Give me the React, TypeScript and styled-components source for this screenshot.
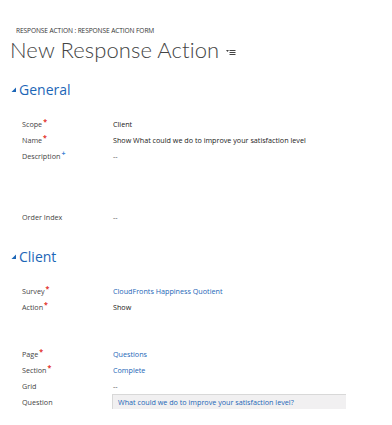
import * as React from "react";
import styled, { createGlobalStyle } from "styled-components";

const GlobalStyle = createGlobalStyle`
  html, body {
    margin: 0;
    padding: 0;
    background: #ffffff;
  }
  body {
    font-family: "Open Sans", "Noto Sans", sans-serif;
    color: #222;
  }
`;

const Page = styled.div`
  width: 392px;
  height: 425px;
  overflow: hidden;
  padding-top: 27px;
  box-sizing: border-box;
`;

const Breadcrumb = styled.div`
  padding-left: 16px;
  font-size: 6.6px;
  line-height: 8px;
  color: #333;
  text-transform: uppercase;
  letter-spacing: -0.1px;
`;

const TitleRow = styled.div`
  display: flex;
  align-items: center;
  gap: 7px;
  padding-left: 10px;
  margin-top: 1px;
  height: 28px;
`;

const Title = styled.h1`
  margin: 0;
  font-family: "Lato", "Open Sans", sans-serif;
  font-size: 22px;
  font-weight: 300;
  color: #444;
  line-height: 28px;
  letter-spacing: 0.1px;
`;

const MenuIcon = () => (
  <svg width="10" height="7" viewBox="0 0 10 7" style={{ marginTop: 4 }}>
    <polygon points="0,1 3,1 1.5,3" fill="#444" />
    <rect x="3.5" y="1" width="6" height="1" fill="#444" />
    <rect x="3.5" y="3" width="6" height="1" fill="#444" />
    <rect x="3.5" y="5" width="6" height="1" fill="#444" />
  </svg>
);

const SectionHeader = styled.div<{ $top: number }>`
  display: flex;
  align-items: center;
  gap: 2px;
  padding-left: 11px;
  margin-top: ${(p) => p.$top}px;
  height: 20px;
  color: #1c66b7;
  font-size: 14px;
`;

const Triangle = () => (
  <svg width="6" height="6" viewBox="0 0 6 6" style={{ marginTop: 2 }}>
    <polygon points="5,0.5 5,5 0.5,5" fill="#1c66b7" />
  </svg>
);

const Form = styled.div<{ $top: number }>`
  display: grid;
  grid-template-columns: 91px 1fr;
  margin-top: ${(p) => p.$top}px;
  padding-left: 22px;
  padding-right: 46px;
  font-size: 7.2px;
`;

const Label = styled.div<{ $height?: number }>`
  height: ${(p) => p.$height ?? 16}px;
  line-height: 16px;
  color: #444;
  white-space: nowrap;
`;

const Mark = styled.sup<{ $color: string }>`
  color: ${(p) => p.$color};
  font-size: 7px;
  line-height: 0;
  margin-left: 1px;
  font-weight: 700;
`;

const Value = styled.div<{ $link?: boolean; $height?: number }>`
  height: ${(p) => p.$height ?? 16}px;
  line-height: 16px;
  color: ${(p) => (p.$link ? "#1c66b7" : "#222")};
  white-space: nowrap;
`;

const Empty = styled(Value)`
  color: #555;
`;

const Spacer = styled.div<{ $height: number }>`
  grid-column: 1 / -1;
  height: ${(p) => p.$height}px;
`;

const LookupBox = styled.div`
  height: 15px;
  margin-left: -1px;
  padding-left: 5px;
  line-height: 15px;
  background: #f1f0f1;
  border-top: 1px solid #d8d8d8;
  border-left: 1px solid #d8d8d8;
  color: #1c66b7;
  box-sizing: border-box;
`;

type Req = "req" | "rec" | undefined;

const FieldLabel = ({ text, req, height }: { text: string; req?: Req; height?: number }) => (
  <Label $height={height}>
    {text}
    {req === "req" && <Mark $color="#e2302a">*</Mark>}
    {req === "rec" && <Mark $color="#3a7fd4">+</Mark>}
  </Label>
);

export default function App() {
  return (
    <Page>
      <GlobalStyle />
      <Breadcrumb>Response Action : Response Action Form</Breadcrumb>
      <TitleRow>
        <Title>New Response Action</Title>
        <MenuIcon />
      </TitleRow>
      <SectionHeader $top={15}>
        <Triangle />
        General
      </SectionHeader>
      <Form $top={17}>
        <FieldLabel text="Scope" req="req" />
        <Value>Client</Value>
        <FieldLabel text="Name" req="req" />
        <Value>Show What could we do to improve your satisfaction level</Value>
        <FieldLabel text="Description" req="rec" height={61} />
        <Empty $height={61}>--</Empty>
        <Label>Order Index</Label>
        <Empty>--</Empty>
      </Form>
      <SectionHeader $top={21}>
        <Triangle />
        Client
      </SectionHeader>
      <Form $top={17}>
        <FieldLabel text="Survey" req="req" />
        <Value $link>CloudFronts Happiness Quotient</Value>
        <FieldLabel text="Action" req="req" />
        <Value>Show</Value>
        <Spacer $height={31} />
        <FieldLabel text="Page" req="req" />
        <Value $link>Questions</Value>
        <FieldLabel text="Section" req="req" />
        <Value $link>Complete</Value>
        <Label>Grid</Label>
        <Empty>--</Empty>
        <Label>Question</Label>
        <Value>
          <LookupBox>What could we do to improve your satisfaction level?</LookupBox>
        </Value>
      </Form>
    </Page>
  );
}
